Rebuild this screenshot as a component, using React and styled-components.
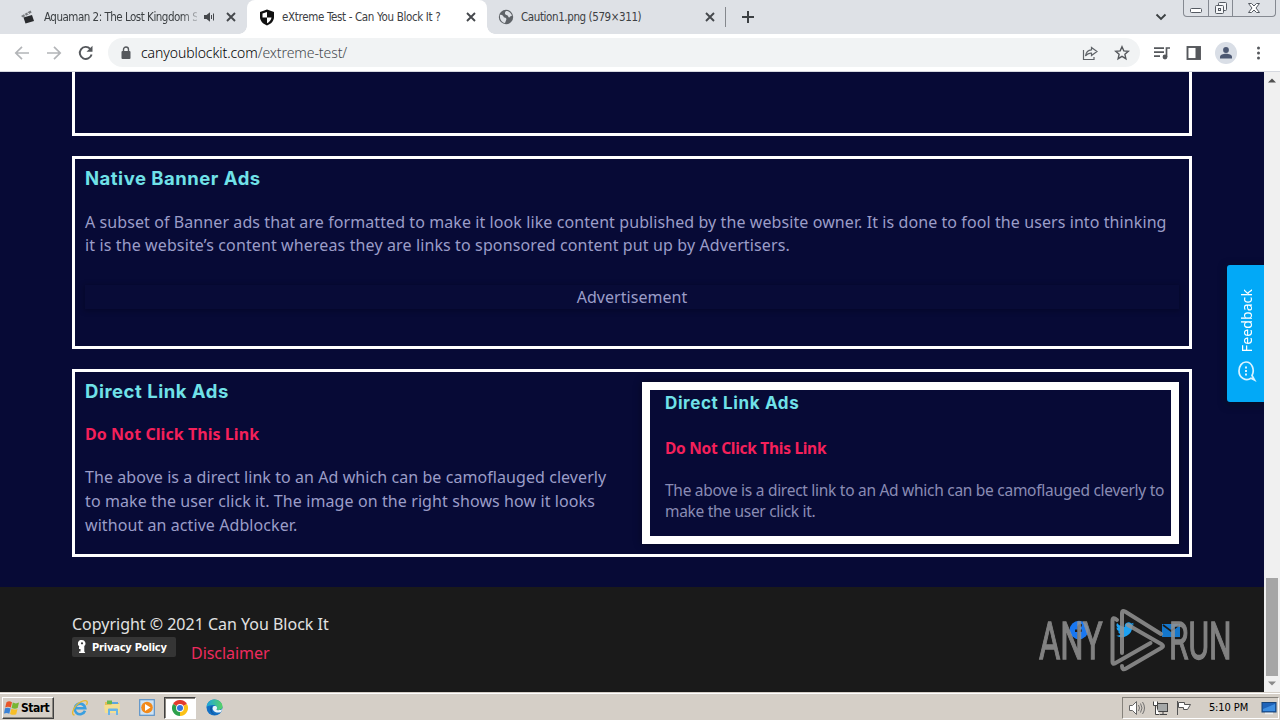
import React from "react";
import styled, { createGlobalStyle } from "styled-components";

const Global = createGlobalStyle`
  * { box-sizing: border-box; }
  body { margin: 0; overflow: hidden; background: #070a36; }
  svg { display: block; flex: none; }
`;

const Screen = styled.div`
  position: relative;
  width: 1280px;
  height: 720px;
  display: flex;
  flex-direction: column;
  overflow: hidden;
  font-family: "Noto Sans", sans-serif;
`;

/* Browser chrome */
const TabStrip = styled.div`
  height: 34px;
  flex: none;
  display: flex;
  background: #dee1e6;
  padding-left: 8px;
`;
const Tab = styled.div`
  width: ${(p) => p.$w}px;
  height: 34px;
  display: flex;
  align-items: center;
  position: relative;
  padding: 0 11px 0 ${(p) => p.$pad}px;
  background: ${(p) => (p.$active ? "#fff" : "transparent")};
  border-radius: 8px 8px 0 0;
  ${(p) =>
    p.$active &&
    `&::before, &::after {
      content: ""; position: absolute; bottom: 0; width: 8px; height: 8px;
    }
    &::before { left: -8px; background: radial-gradient(circle at 0 0, transparent 7.5px, #fff 8px); }
    &::after { right: -8px; background: radial-gradient(circle at 100% 0, transparent 7.5px, #fff 8px); }`}
`;
const TabTitle = styled.span`
  flex: 1;
  min-width: 0;
  margin-left: ${(p) => p.$gap}px;
  margin-right: 6px;
  white-space: nowrap;
  font: 11.5px "DejaVu Sans Condensed", "DejaVu Sans", sans-serif;
  font-stretch: condensed;
  letter-spacing: ${(p) => p.$ls || 0}px;
  color: #3c4043;
  ${(p) => p.$fade && "mask-image: linear-gradient(90deg, #000 90%, rgba(0,0,0,.25) 100%);"}
`;
const TabEnd = styled.div`
  width: 1px;
  height: 20px;
  margin: 7px 15px 0 -1px;
  background: #85888d;
`;
const NewTab = styled.div`
  margin-top: 10px;
`;
const StripRight = styled.div`
  margin-left: auto;
  display: flex;
  gap: 16px;
`;
const TabSearch = styled.div`
  margin-top: 12px;
`;
const WindowButtons = styled.div`
  display: flex;
  width: 93px;
  height: 17px;
  margin-right: 4px;
  border: 1px solid #858991;
  border-top: 0;
  border-radius: 0 0 4px 4px;
`;
const WindowButton = styled.div`
  width: ${(p) => p.$w}px;
  display: flex;
  justify-content: center;
  border-right: ${(p) => (p.$last ? 0 : 1)}px solid #858991;
`;
const Toolbar = styled.div`
  height: 38px;
  flex: none;
  display: flex;
  align-items: center;
  background: #fff;
  border-bottom: 1px solid #d5d8df;
  padding: 0 12px 0 14px;
`;
const NavButtons = styled.div`
  display: flex;
  gap: 16px;
  width: 94px;
`;
const Omnibox = styled.div`
  width: 1032px;
  height: 29px;
  display: flex;
  align-items: center;
  border-radius: 15px;
  background: #f1f3f4;
  padding: 0 10px 0 12px;
`;
const Url = styled.span`
  flex: 1;
  margin-left: 9px;
  font: 300 14px "Noto Sans", sans-serif;
  letter-spacing: -0.08px;
  color: #000;
  span { color: #45494e; }
`;
const OmniActions = styled.div`
  display: flex;
  gap: 16px;
`;
const ToolbarActions = styled.div`
  display: flex;
  align-items: center;
  margin-left: 13px;
  gap: 13px;
`;
const Avatar = styled.div`
  width: 22px;
  height: 22px;
  border-radius: 50%;
  background: #d9dee6;
  display: flex;
  justify-content: center;
  align-items: center;
`;

/* Page */
const Viewport = styled.div`
  height: 620px;
  flex: none;
  display: flex;
`;
const Page = styled.div`
  position: relative;
  width: 1264px;
  background: #070a36;
  display: flex;
  flex-direction: column;
  overflow: hidden;
`;
const Sections = styled.main`
  height: 515px;
  display: flex;
  flex-direction: column;
  gap: 20px;
  padding: 0 72px;
`;
const Card = styled.section`
  height: ${(p) => p.$h}px;
  flex: none;
  border: 3px solid #fff;
  ${(p) => p.$cut && "border-top: 0;"}
  padding: ${(p) => (p.$split ? "10px" : "7px 10px")};
  display: flex;
  flex-direction: ${(p) => (p.$split ? "row" : "column")};
`;
const Column = styled.div`
  width: 557px;
  flex: none;
  margin-top: -3px;
`;
const Heading = styled.h2`
  margin: 0;
  height: 26px;
  font: 700 ${(p) => p.$size || 18.5}px/${(p) => p.$lh || 24}px Inter, sans-serif;
  letter-spacing: ${(p) => p.$ls || 0}px;
  color: #70e1e8;
  white-space: nowrap;
`;
const WarnLink = styled.a`
  display: block;
  margin-top: ${(p) => p.$top}px;
  font: 700 ${(p) => p.$size}px/24px "Noto Sans", sans-serif;
  letter-spacing: ${(p) => p.$ls || 0}px;
  color: #f4205a;
  white-space: nowrap;
`;
const Copy = styled.p`
  margin: ${(p) => p.$top}px 0 0;
  font: 400 ${(p) => p.$size || 16}px/${(p) => p.$lh}px "Noto Sans", sans-serif;
  color: ${(p) => p.$color || "#9b9dc8"};
`;
const Line = styled.span`
  display: block;
  white-space: nowrap;
  letter-spacing: ${(p) => p.$ls || 0}px;
`;
const AdSlot = styled.div`
  height: 24px;
  margin-top: 28px;
  text-align: center;
  font-size: 16px;
  line-height: 24px;
  letter-spacing: 0.05px;
  color: #9b9dc8;
  background: #080b37;
  box-shadow: 0 1px 5px 1px rgba(0, 0, 20, 0.35);
`;
const Shot = styled.div`
  width: 537px;
  height: 162px;
  border: 8px solid #fff;
  padding: 0 0 0 15px;
  margin-right: -1px;
  box-shadow: 0 0 8px rgba(0, 0, 0, 0.4);
  background: #070a36;
`;
const Footer = styled.footer`
  height: 105px;
  flex: none;
  background: #1a1a1a;
  padding: 25px 83px 0 72px;
  display: flex;
  justify-content: space-between;
`;
const Copyright = styled.div`
  height: 25px;
  font-size: 16px;
  line-height: 24px;
  letter-spacing: -0.01px;
  color: #e2e2e2;
`;
const FooterLinks = styled.div`
  display: flex;
  align-items: flex-start;
  gap: 15px;
`;
const PolicyBadge = styled.div`
  width: 104px;
  height: 20px;
  display: flex;
  align-items: center;
  gap: 6px;
  padding-left: 6px;
  border-radius: 2px;
  background: #353535;
  color: #fff;
  font: 700 11px "DejaVu Sans Condensed", "DejaVu Sans", sans-serif;
  font-stretch: condensed;
  letter-spacing: -0.2px;
  white-space: nowrap;
`;
const Disclaimer = styled.a`
  margin-top: 4px;
  font-size: 16px;
  line-height: 24px;
  letter-spacing: -0.05px;
  color: #ee2a5e;
`;
const Social = styled.div`
  display: flex;
  gap: 26px;
  margin-top: 8px;
`;
const FeedbackTab = styled.div`
  position: absolute;
  right: 0;
  top: 193px;
  width: 37px;
  height: 137px;
  border-radius: 3px 0 0 3px;
  background: #02a9f7;
  box-shadow: 0 2px 8px rgba(0, 20, 20, 0.6);
  display: flex;
  flex-direction: column;
  align-items: center;
  justify-content: flex-end;
  gap: 8px;
  padding: 0 0 20px 2px;
`;
const FeedbackText = styled.span`
  writing-mode: vertical-rl;
  transform: rotate(180deg);
  font-size: 14px;
  line-height: 18px;
  letter-spacing: 0.1px;
  color: #fff;
`;
const ScrollTrack = styled.div`
  width: 16px;
  background: #f0f0f0;
  display: flex;
  flex-direction: column;
  align-items: center;
  justify-content: space-between;
  padding: 6px 0 6px;
`;
const ScrollBottom = styled.div`
  display: flex;
  flex-direction: column;
  align-items: center;
  gap: 5px;
`;
const Thumb = styled.div`
  width: 12px;
  height: 98px;
  background: #a6a6a6;
`;

/* Recorder watermark lying over the page */
const Watermark = styled.div`
  position: absolute;
  left: 1038px;
  top: 608px;
  width: 196px;
  height: 66px;
  opacity: 0.85;
`;

/* Taskbar */
const Taskbar = styled.div`
  height: 28px;
  flex: none;
  display: flex;
  align-items: center;
  justify-content: space-between;
  padding: 2px 0 0 2px;
  background: #d5cfc7;
  border-top: 1px solid #d5cfc7;
  box-shadow: inset 0 1px 0 #fff;
`;
const TaskLeft = styled.div`
  display: flex;
  align-items: center;
`;
const StartButton = styled.div`
  width: 52px;
  height: 22px;
  display: flex;
  align-items: center;
  gap: 1px;
  padding-left: 1px;
  margin-right: 9px;
  border: 1px solid;
  border-color: #fff #404040 #404040 #fff;
  box-shadow: inset -1px -1px 0 #8b8780;
  font: 700 12px "DejaVu Sans Condensed", "DejaVu Sans", sans-serif;
  font-stretch: condensed;
  letter-spacing: -0.5px;
  color: #000;
`;
const TaskItem = styled.div`
  width: ${(p) => p.$w}px;
  height: 22px;
  display: flex;
  align-items: center;
  justify-content: center;
  ${(p) =>
    p.$on &&
    `background: #fff; border: 1px solid; border-color: #404040 #fff #fff #404040;
     box-shadow: inset 1px 1px 0 #8b8780;`}
`;
const Tray = styled.div`
  width: 157px;
  height: 22px;
  margin-right: 1px;
  display: flex;
  align-items: center;
  border: 1px solid;
  border-color: #86827b #fff #fff #86827b;
  padding-left: 5px;
`;
const Clock = styled.span`
  width: 53px;
  flex: none;
  margin-left: 2px;
  text-align: center;
  white-space: nowrap;
  font: 11px "DejaVu Sans Condensed", "DejaVu Sans", sans-serif;
  font-stretch: condensed;
  letter-spacing: -0.1px;
  color: #000;
`;
const TrayIcon = styled.div`
  width: 24px;
  flex: none;
`;
const Speaker = styled.div`
  margin-right: 11px;
`;
const TrayEnd = styled.div`
  margin-left: 6px;
`;

const Close = () => (
  <svg width="10" height="10" viewBox="0 0 10 10" stroke="#45484c" strokeWidth="1.9">
    <path d="M1 1l8 8M9 1l-8 8" />
  </svg>
);

const Windows = () => (
  <svg width="16" height="16" viewBox="0 0 16 16">
    <path d="M2.5 2.2C4.5 1 6 1.2 8 2.2L6.8 7.6C5 6.600 3.300 6.500 1.200 7.500z" fill="#e8562a" />
    <path d="M8.800 2.600c2 1 3.900 1.100 6.200 0l-1.300 5.400c-2 1-4 .8-6.100-.1z" fill="#78b632" />
    <path d="M1 8.300c2-1 3.700-.8 5.600.1L5.300 13.700C3.500 12.700 2 12.700 0 13.500z" fill="#3b82d6" />
    <path d="M7.400 8.800c2 .9 4 1 6.100.1l-1.300 5.300c-2 1-4 .8-6.100-.2z" fill="#f7be27" />
  </svg>
);

const Explorer = () => (
  <svg width="18" height="18" viewBox="0 0 18 18" fill="none">
    <path d="M14 11.800A5.300 5.300 0 1 1 14.300 9.300H4.500" stroke="#3b9fdf" strokeWidth="2.600" />
    <path d="M3.500 16C-1 16 3 6 10.500 2.500 15.500.5 17.500 2 15.500 6" stroke="#e8b92d" strokeWidth="1.300" />
  </svg>
);

const Folder = () => (
  <svg width="17" height="17" viewBox="0 0 17 17">
    <path d="M1 3h4l1 1h9v9H1z" fill="#e3bd58" />
    <path d="M3 1.500h5V5H3z" fill="#65b84f" />
    <path d="M8 3h6v3H8z" fill="#5ea6dd" />
    <path d="M0 6h7l1-1h8l-.5 9H1z" fill="#f4df91" />
    <path d="M4 10.500q0-1 1-1h8q1 0 1 1V16h-2v-4H6v4H4z" fill="#69b5e8" />
  </svg>
);

const Player = () => (
  <svg width="16" height="17" viewBox="0 0 16 17">
    <rect x=".7" y=".7" width="14.600" height="15.600" fill="#cfe3f4" stroke="#5b93c9" strokeWidth="1.200" />
    <circle cx="8" cy="8.500" r="5.800" fill="#f28a1b" />
    <path d="M6 5l5.500 3.500L6 12z" fill="#fff" />
  </svg>
);

const Chrome = () => (
  <svg width="16" height="16" viewBox="0 0 16 16">
    <path d="M8 8L1.070 4A8 8 0 0 1 14.930 4z" fill="#e33b2e" />
    <path d="M8 8L14.930 4A8 8 0 0 1 8 16z" fill="#fbc116" />
    <path d="M8 8v8A8 8 0 0 1 1.070 4z" fill="#2da14c" />
    <circle cx="8" cy="8" r="3.900" fill="#fff" />
    <circle cx="8" cy="8" r="3" fill="#3474e0" />
  </svg>
);

const Edge = () => (
  <svg width="17" height="17" viewBox="0 0 17 17">
    <defs>
      <linearGradient id="edgeTop" x1="0" x2="1">
        <stop offset="0" stopColor="#1ea4de" />
        <stop offset="1" stopColor="#57d364" />
      </linearGradient>
    </defs>
    <circle cx="8.500" cy="8.500" r="8" fill="#1470c4" />
    <path d="M.5 8C1 3 4.500.5 8.500.5c5 0 8.300 4 8 7.500-.3 3-4 3.700-6 2.500 1-2-.5-4.500-3.500-4.500C4 6 1.500 7 .5 8z" fill="url(#edgeTop)" />
    <path d="M6.500 9c0 3.500 4 5.500 8.500 4l1.500-3c-2 1.500-6 1.500-6 .5 0-.8.800-.8.500-2C10.500 6.500 6.500 6.500 6.500 9z" fill="#eaf5fb" />
    <path d="M5 7c-3 5 2 9.500 6 9C6 15 5 11.500 6.500 8z" fill="#0c57a0" />
  </svg>
);

export default function App() {
  return (
    <Screen>
      <Global />
      <TabStrip>
        <Tab $w={239} $pad={13}>
          <svg width="14" height="14" viewBox="0 0 14 14">
            <path d="M0 6L9.500.5l1.200 2L2 7.500z" fill="#777a7e" />
            <path d="M2.500 7.500L11 5l2 6-8.500 2.600z" fill="#292b2e" />
            <path d="M3 4.500l2 1M6 2.700l2 1" stroke="#dee1e6" />
          </svg>
          <TabTitle $gap={9} $fade $ls={-0.5}>Aquaman 2: The Lost Kingdom S</TabTitle>
          <Speaker>
            <svg width="12" height="12" viewBox="0 0 12 12">
              <path d="M1 4h2.500L7 1.200v9.600L3.500 8H1z" fill="#45484c" />
              <path d="M8.500 4v4M10.500 2.500v7" stroke="#45484c" />
            </svg>
          </Speaker>
          <Close />
        </Tab>
        <Tab $w={240} $pad={12} $active>
          <svg width="16" height="17" viewBox="0 0 16 17">
            <path d="M8 .5l7 2.500v5c0 4-3 7-7 8.500C4 15 1 12 1 8V3z" fill="#111" />
            <path d="M8 3v5.500H3.500V4.500zM8 8.500h4.500C12.200 11 10.500 13 8 14.200z" fill="#fff" />
          </svg>
          <TabTitle $gap={7} $ls={-0.34}>eXtreme Test - Can You Block It ?</TabTitle>
          <Close />
        </Tab>
        <Tab $w={239} $pad={11}>
          <svg width="16" height="16" viewBox="0 0 16 16">
            <circle cx="8" cy="8" r="7.200" fill="#5f6368" />
            <path d="M2 6c2-.5 3 .5 4 2.500 2 0 3 1 2 3l-1 2.500C3.500 13.500 1.500 10 2 6zM8 2c3-.2 5 2 6 4.500-1 1-2 .5-2.500 2-1.500 0-1-2-3-2.500-2-.5-2-2.500-.5-4z" fill="#dee1e6" />
          </svg>
          <TabTitle $gap={7} $ls={-0.4}>Caution1.png (579×311)</TabTitle>
          <Close />
        </Tab>
        <TabEnd />
        <NewTab>
          <svg width="14" height="14" viewBox="0 0 14 14" stroke="#3c4043" strokeWidth="2">
            <path d="M7 1v12M1 7h12" />
          </svg>
        </NewTab>
        <StripRight>
          <TabSearch>
            <svg width="12" height="10" viewBox="0 0 12 10" fill="none" stroke="#3c4043" strokeWidth="1.900">
              <path d="M1.500 2.500L6 7l4.500-4.500" />
            </svg>
          </TabSearch>
          <WindowButtons>
            <WindowButton $w={25}>
              <svg width="14" height="16" viewBox="0 0 14 16">
                <rect x="1.500" y="8.500" width="11" height="4" rx="1" fill="#fff" stroke="#555a62" />
              </svg>
            </WindowButton>
            <WindowButton $w={25}>
              <svg width="14" height="16" viewBox="0 0 14 16" fill="#f5f6f8" stroke="#555a62">
                <rect x="4.500" y="2.500" width="8" height="8" rx="1" />
                <rect x="1.500" y="5.500" width="8" height="8" rx="1" />
                <rect x="4.500" y="8.500" width="2" height="2" />
              </svg>
            </WindowButton>
            <WindowButton $w={42} $last>
              <svg width="14" height="16" viewBox="0 0 14 16">
                <path d="M1.500 3.500h3L7 6l2.500-2.500h3L9 8l3.500 4.500h-3L7 10l-2.500 2.500h-3L5 8z" fill="#fff" stroke="#555a62" />
              </svg>
            </WindowButton>
          </WindowButtons>
        </StripRight>
      </TabStrip>

      <Toolbar>
        <NavButtons>
          <svg width="16" height="16" viewBox="0 0 16 16" fill="none" stroke="#b3b5b8" strokeWidth="1.700">
            <path d="M15 8H2M8 1.800L1.800 8 8 14.200" />
          </svg>
          <svg width="16" height="16" viewBox="0 0 16 16" fill="none" stroke="#b3b5b8" strokeWidth="1.700">
            <path d="M1 8h13M8 1.800L14.200 8 8 14.200" />
          </svg>
          <svg width="16" height="16" viewBox="0 0 16 16">
            <path d="M13.600 9.500A6 6 0 1 1 12.200 3.800" fill="none" stroke="#55585c" strokeWidth="1.900" />
            <path d="M14.500.8v6h-6z" fill="#55585c" />
          </svg>
        </NavButtons>
        <Omnibox>
          <svg width="12" height="14" viewBox="0 0 12 14">
            <rect x="1.500" y="5" width="9" height="8" rx="1" fill="#55585c" />
            <path d="M3.500 5V3.500a2.500 2.500 0 0 1 5 0V5" fill="none" stroke="#55585c" strokeWidth="1.400" />
          </svg>
          <Url>canyoublockit.com<span>/extreme-test/</span></Url>
          <OmniActions>
            <svg width="16" height="16" viewBox="0 0 16 16" fill="none" stroke="#5f6368" strokeWidth="1.200">
              <path d="M1.500 5v9.500H12V12" />
              <path d="M9.500 2.500L15 6.500 9.500 10.500V8.200C7 8 5 9 3.500 11 4 7.500 6 5 9.500 4.800z" />
            </svg>
            <svg width="16" height="16" viewBox="0 0 16 16" fill="none" stroke="#55585c" strokeWidth="1.400">
              <path d="M8 1.800l1.800 4.100 4.500.4-3.400 3 1 4.400L8 11.400l-3.900 2.300 1-4.400-3.400-3 4.500-.4z" />
            </svg>
          </OmniActions>
        </Omnibox>
        <ToolbarActions>
          <svg width="18" height="16" viewBox="0 0 18 16">
            <path d="M1 3.200h10M1 7.200h10M1 11.200h6M13.500 12V3H17" fill="none" stroke="#55585c" strokeWidth="1.700" />
            <circle cx="12" cy="12" r="2.400" fill="#55585c" />
          </svg>
          <svg width="18" height="16" viewBox="0 0 18 16">
            <rect x="3.500" y="2" width="12.500" height="12" fill="none" stroke="#55585c" strokeWidth="1.900" />
            <path d="M11.500 2H16v12h-4.500z" fill="#55585c" />
          </svg>
          <Avatar>
            <svg width="14" height="14" viewBox="0 0 14 14" fill="#4c5872">
              <circle cx="7" cy="4" r="2.900" />
              <path d="M1 12.500V11c0-2 3-3.200 6-3.200s6 1.200 6 3.200v1.500z" />
            </svg>
          </Avatar>
          <svg width="16" height="16" viewBox="0 0 16 16" fill="#55585c">
            <circle cx="8.500" cy="3" r="1.500" />
            <circle cx="8.500" cy="8" r="1.500" />
            <circle cx="8.500" cy="13" r="1.500" />
          </svg>
        </ToolbarActions>
      </Toolbar>

      <Viewport>
        <Page>
          <Sections>
            <Card $h={64} $cut />
            <Card $h={193}>
              <Heading $ls={0.5}>Native Banner Ads</Heading>
              <Copy $top={19} $lh={23}>
                <Line $ls={0.087}>A subset of Banner ads that are formatted to make it look like content published by the website owner. It is done to fool the users into thinking</Line>
                <Line $ls={0.12}>it is the website’s content whereas they are links to sponsored content put up by Advertisers.</Line>
              </Copy>
              <AdSlot>Advertisement</AdSlot>
            </Card>
            <Card $h={188} $split>
              <Column>
                <Heading $ls={0.52}>Direct Link Ads</Heading>
                <WarnLink $top={17} $size={16} $ls={0.06}>Do Not Click This Link</WarnLink>
                <Copy $top={19} $lh={24}>
                  <Line $ls={0.07}>The above is a direct link to an Ad which can be camoflauged cleverly</Line>
                  <Line $ls={0.1}>to make the user click it. The image on the right shows how it looks</Line>
                  <Line $ls={0.08}>without an active Adblocker.</Line>
                </Copy>
              </Column>
              <Shot>
                <Heading $size={17} $ls={0.62} $lh={26}>Direct Link Ads</Heading>
                <WarnLink $top={20} $size={15.5} $ls={-0.28}>Do Not Click This Link</WarnLink>
                <Copy $top={20} $lh={21} $size={15.5} $color="#8a8cb4">
                  <Line $ls={-0.28}>The above is a direct link to an Ad which can be camoflauged cleverly to</Line>
                  <Line $ls={-0.3}>make the user click it.</Line>
                </Copy>
              </Shot>
            </Card>
          </Sections>
          <Footer>
            <div>
              <Copyright>Copyright © 2021 Can You Block It</Copyright>
              <FooterLinks>
                <PolicyBadge>
                  <svg width="8" height="14" viewBox="0 0 8 14">
                    <path d="M4 0a3.500 3.500 0 0 1 2.300 6.100v5.400l1 1.500H1v-1.500h1.500V9H1V6.500h.7A3.500 3.500 0 0 1 4 0z" fill="#fff" />
                    <circle cx="4" cy="3.300" r="1.100" fill="#353535" />
                  </svg>
                  Privacy Policy
                </PolicyBadge>
                <Disclaimer>Disclaimer</Disclaimer>
              </FooterLinks>
            </div>
            <Social>
              <svg width="20" height="20" viewBox="0 0 20 20">
                <circle cx="10" cy="10" r="9.300" fill="#1877f2" />
                <path d="M8.500 19v-7H6V9.500h2.500v-2C8.500 5 10 3.800 13 4.200v2.200c-2-.1-2.200.3-2.200 3.100H13l-.4 2.500h-1.800v7z" fill="#1a1a1a" />
              </svg>
              <svg width="20" height="20" viewBox="0 0 24 24">
                <path d="M23 5a9 9 0 0 1-2.600.7 4.500 4.500 0 0 0 2-2.500 9 9 0 0 1-2.900 1.100 4.500 4.500 0 0 0-7.700 4.100A12.800 12.800 0 0 1 2.500 3.700a4.500 4.500 0 0 0 1.400 6 4.500 4.500 0 0 1-2-.6 4.500 4.500 0 0 0 3.600 4.500 4.500 4.500 0 0 1-2 .1 4.500 4.500 0 0 0 4.200 3.100A9 9 0 0 1 1 18.700a12.800 12.800 0 0 0 19.700-11.400A9 9 0 0 0 23 5z" fill="#1da1f2" />
              </svg>
              <svg width="20" height="20" viewBox="0 0 20 20">
                <rect x="1" y="4" width="18" height="13" fill="#1477cc" />
                <path d="M2 5l8 6 8-6" fill="none" stroke="#1a1a1a" strokeWidth="1.600" />
              </svg>
            </Social>
          </Footer>
          <FeedbackTab>
            <FeedbackText>Feedback</FeedbackText>
            <svg width="20" height="22" viewBox="0 0 20 22" fill="none" stroke="#d9f3ff" strokeWidth="1.700">
              <path d="M17.500 20l-3.500-1.800C9 21.500 2 18 2 11 2 6 5 2 9 2c6 0 9 8 6 13.500z" />
              <path d="M9 6.500v2M9 10v2M9 13.500v2" strokeWidth="2" />
            </svg>
          </FeedbackTab>
        </Page>
        <ScrollTrack>
          <svg width="8" height="5" viewBox="0 0 8 5" fill="#505050"><path d="M0 4.500L4 .5l4 4z" /></svg>
          <ScrollBottom>
            <Thumb />
            <svg width="8" height="5" viewBox="0 0 8 5" fill="#8a8a8a"><path d="M0 .5h8l-4 4z" /></svg>
          </ScrollBottom>
        </ScrollTrack>
      </Viewport>

      <Watermark>
        <svg width="196" height="66" viewBox="0 0 196 66">
          <g fill="#949494" stroke="#949494" strokeWidth="1.300" fontFamily="Roboto, sans-serif" fontSize="52">
            <text x="0" y="51" textLength="108" lengthAdjust="spacingAndGlyphs" transform="translate(1 0) scale(.59 1)">ANY</text>
            <text x="0" y="51" textLength="110" lengthAdjust="spacingAndGlyphs" transform="translate(131 0) scale(.57 1)">RUN</text>
          </g>
          <g fill="none" stroke="#949494" strokeWidth="4" strokeLinejoin="round" strokeLinecap="round">
            <path d="M84 45V5q0-3 3-1.500L123 26" />
            <path d="M79 12q-4.500-4-4.500 1v41q0 3 3 1l35-20" />
            <path d="M84 58q0 5 4 2.500l36-21q2-1.500 0-3L90 17" />
          </g>
        </svg>
      </Watermark>

      <Taskbar>
        <TaskLeft>
          <StartButton><Windows />Start</StartButton>
          <TaskItem $w={33}><Explorer /></TaskItem>
          <TaskItem $w={33}><Folder /></TaskItem>
          <TaskItem $w={35}><Player /></TaskItem>
          <TaskItem $w={32} $on><Chrome /></TaskItem>
          <TaskItem $w={37}><Edge /></TaskItem>
        </TaskLeft>
        <Tray>
          <TrayIcon>
            <svg width="17" height="16" viewBox="0 0 17 16" fill="none" stroke="#666">
              <path d="M1.500 5.500h3l4-4v13l-4-4h-3z" fill="#fff" />
              <path d="M10.500 5q2 3 0 6M12.500 3.500q3 4.500 0 9M14.500 2q4 6 0 12" strokeWidth=".9" />
            </svg>
          </TrayIcon>
          <TrayIcon>
            <svg width="17" height="16" viewBox="0 0 17 16" stroke="#444">
              <rect x="5.500" y="3.500" width="10" height="8" fill="#a5a8a8" />
              <path d="M8 14.500h7M11 12v2" />
              <path d="M1.500 1.500v4h4v-4M3.500 5.500v9h4" fill="#fff" />
            </svg>
          </TrayIcon>
          <TrayIcon>
            <svg width="17" height="16" viewBox="0 0 17 16" fill="#fff" stroke="#555">
              <path d="M1.500 1v14" />
              <path d="M2.500 2.500h6v2h6l-3 5h-4v-2h-5z" />
            </svg>
          </TrayIcon>
          <Clock>5:10 PM</Clock>
          <TrayEnd>
            <svg width="16" height="16" viewBox="0 0 16 16">
              <rect x="1" y="2.500" width="14" height="9.500" fill="#1f63b9" stroke="#174478" />
              <path d="M2 9L14 4v7H2z" fill="#3e8ee0" />
              <path d="M4 13.500h8" stroke="#e9edf1" strokeWidth="1.500" />
            </svg>
          </TrayEnd>
        </Tray>
      </Taskbar>
    </Screen>
  );
}
